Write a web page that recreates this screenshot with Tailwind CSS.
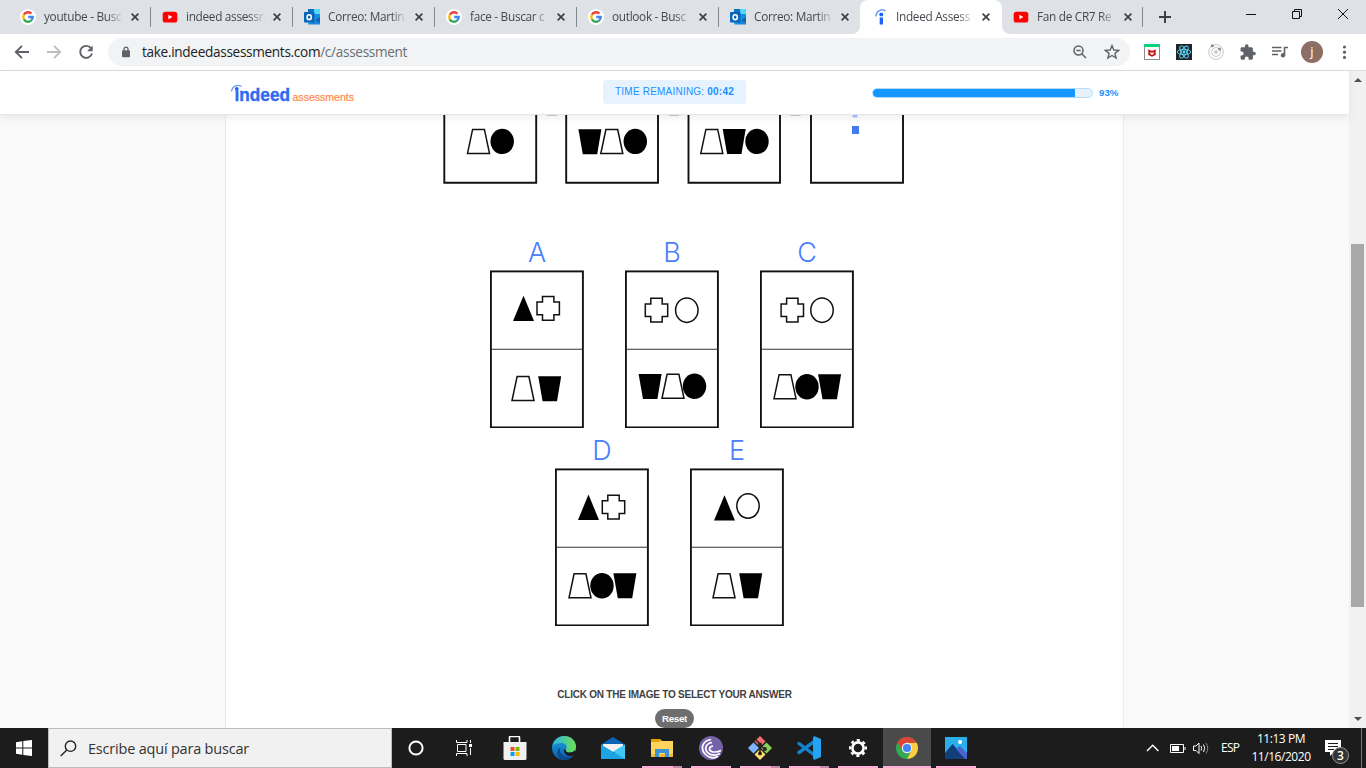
<!DOCTYPE html>
<html lang="es">
<head>
<meta charset="utf-8">
<title>Indeed Assessments</title>
<script src="https://cdn.jsdelivr.net/npm/@tailwindcss/browser@4"></script>
</head>
<body class="w-[1366px] h-[768px] overflow-hidden flex flex-col bg-white font-['Open_Sans','Noto_Sans',sans-serif]">
<svg width="0" height="0" class="absolute">
  <defs>
    <symbol id="google" viewBox="0 0 16 16"><circle cx="8" cy="8" r="8" fill="#fff"/><g fill="none" stroke-width="2.4"><path d="M3.9 5.7A4.7 4.7 0 0 1 11.4 4.7" stroke="#ea4335"/><path d="M3.9 10.3A4.7 4.7 0 0 1 3.9 5.7" stroke="#fbbc05"/><path d="M11.1 11.6A4.7 4.7 0 0 1 3.9 10.3" stroke="#34a853"/><path d="M8.2 8H12.7A4.7 4.7 0 0 1 11.1 11.6" stroke="#4285f4"/></g></symbol>
    <symbol id="youtube" viewBox="0 0 16 16"><rect x=".7" y="2.7" width="14.6" height="10.8" rx="2.6" fill="#f00"/><path d="M6.4 5.7v4.6l4-2.3z" fill="#fff"/></symbol>
    <symbol id="outlook" viewBox="0 0 16 16"><path d="M4 0h12v15H4z" fill="#28a8ea"/><path d="M10 0h6v5h-6z" fill="#50d9ff"/><path d="M4 0h6v5H4z" fill="#0f6fc0"/><path d="M10 5h6v4l-3 2-3-2z" fill="#1490df"/><path d="M4 15.5 16 8v7.5z" fill="#1a86d9"/><path d="M11 11l5-3v6z" fill="#1066b5"/><rect y="3" width="10.5" height="10.5" rx=".8" fill="#0a64b8"/><ellipse cx="5.2" cy="8.2" rx="2.1" ry="2.4" fill="none" stroke="#fff" stroke-width="1.6"/></symbol>
    <symbol id="indeed" viewBox="0 0 16 16"><circle cx="8.3" cy="5.4" r="2" fill="#2164f3"/><path d="M6.7 8.2q1.7.9 3.3 0v7.3H6.7z" fill="#2164f3"/><path d="M2.8 7.5C3.2 2 8-.6 12.6 2" fill="none" stroke="#5a8df5" stroke-width="1.2"/></symbol>
    <symbol id="close" viewBox="0 0 8 8"><path d="M.6.6 7.4 7.4M7.4.6.6 7.4" stroke="#3c4043" stroke-width="1.7"/></symbol>
    <symbol id="trap" viewBox="0 0 24 26" overflow="visible"><path d="M6.1 1H17.9L23 25H1z" fill="#fff" stroke="#111" stroke-width="1.5"/></symbol>
    <symbol id="cup" viewBox="0 0 24 26" overflow="visible"><path d="M.4.5H23.4L19.2 25.5H4.8z" fill="#000"/></symbol>
    <symbol id="disc" viewBox="0 0 24 26" overflow="visible"><ellipse cx="12" cy="13" rx="11.7" ry="12.7" fill="#000"/></symbol>
    <symbol id="ring" viewBox="0 0 24 26" overflow="visible"><ellipse cx="12" cy="13" rx="11.2" ry="12.2" fill="#fff" stroke="#111" stroke-width="1.5"/></symbol>
    <symbol id="tri" viewBox="0 0 24 26" overflow="visible"><path d="M10.5.3 21 25.6H0z" fill="#000"/></symbol>
    <symbol id="cross" viewBox="0 0 24 26" overflow="visible"><path d="M6.3 1H17.7V6.6H23.2V19.2H17.7V24.7H6.3V19.2H.8V6.6H6.3z" fill="#fff" stroke="#111" stroke-width="1.5"/></symbol>
    <symbol id="frame" viewBox="0 0 94 158"><rect x=".9" y="1.400" width="92" height="156" fill="#fff" stroke="#111" stroke-width="1.9"/><path d="M1 79.2H93" stroke="#333" stroke-width="1.1"/></symbol>
  </defs>
</svg>

<!-- Tab strip -->
<div class="h-[34px] shrink-0 bg-[#dee1e6] flex items-center pl-[9px] text-[11.8px] tracking-[-0.3px] text-[#45494d]">
  <div class="w-[142px] h-[34px] flex items-center pl-[11px]"><svg class="size-4"><use href="#google"/></svg><span class="ml-2 w-[79px] overflow-hidden whitespace-nowrap mask-r-from-80% mask-r-to-100%">youtube - Busc</span><svg class="ml-[8px] size-[8px]"><use href="#close"/></svg><i class="ml-auto w-px h-5 bg-[#85898d]"></i></div>
  <div class="w-[142px] h-[34px] flex items-center pl-[11px]"><svg class="size-4"><use href="#youtube"/></svg><span class="ml-2 w-[79px] overflow-hidden whitespace-nowrap mask-r-from-80% mask-r-to-100%">indeed assessn</span><svg class="ml-[8px] size-[8px]"><use href="#close"/></svg><i class="ml-auto w-px h-5 bg-[#85898d]"></i></div>
  <div class="w-[142px] h-[34px] flex items-center pl-[11px]"><svg class="size-4"><use href="#outlook"/></svg><span class="ml-2 w-[79px] overflow-hidden whitespace-nowrap mask-r-from-80% mask-r-to-100%">Correo: Martin</span><svg class="ml-[8px] size-[8px]"><use href="#close"/></svg><i class="ml-auto w-px h-5 bg-[#85898d]"></i></div>
  <div class="w-[142px] h-[34px] flex items-center pl-[11px]"><svg class="size-4"><use href="#google"/></svg><span class="ml-2 w-[79px] overflow-hidden whitespace-nowrap mask-r-from-80% mask-r-to-100%">face - Buscar c</span><svg class="ml-[8px] size-[8px]"><use href="#close"/></svg><i class="ml-auto w-px h-5 bg-[#85898d]"></i></div>
  <div class="w-[142px] h-[34px] flex items-center pl-[11px]"><svg class="size-4"><use href="#google"/></svg><span class="ml-2 w-[79px] overflow-hidden whitespace-nowrap mask-r-from-80% mask-r-to-100%">outlook - Busc</span><svg class="ml-[8px] size-[8px]"><use href="#close"/></svg><i class="ml-auto w-px h-5 bg-[#85898d]"></i></div>
  <div class="w-[141px] h-[34px] flex items-center pl-[11px]"><svg class="size-4"><use href="#outlook"/></svg><span class="ml-2 w-[79px] overflow-hidden whitespace-nowrap mask-r-from-80% mask-r-to-100%">Correo: Martin</span><svg class="ml-[8px] size-[8px]"><use href="#close"/></svg></div>
  <div class="relative w-[142px] h-[34px] flex items-center pl-[13px] bg-white rounded-t-lg"><svg class="absolute -left-2 bottom-0 size-2"><path d="M8 0V8H0A8 8 0 0 0 8 0" fill="#fff"/></svg><svg class="absolute -right-2 bottom-0 size-2"><path d="M0 0V8H8A8 8 0 0 1 0 0" fill="#fff"/></svg><svg class="size-4"><use href="#indeed"/></svg><span class="ml-[7px] w-[78px] overflow-hidden whitespace-nowrap mask-r-from-80% mask-r-to-100%">Indeed Assess</span><svg class="ml-[8px] size-[8px]"><use href="#close"/></svg></div>
  <div class="w-[141px] h-[34px] flex items-center pl-[11px]"><svg class="size-4"><use href="#youtube"/></svg><span class="ml-2 w-[79px] overflow-hidden whitespace-nowrap mask-r-from-80% mask-r-to-100%">Fan de CR7 Re</span><svg class="ml-[8px] size-[8px]"><use href="#close"/></svg><i class="ml-auto w-px h-5 bg-[#85898d]"></i></div>
  <svg class="ml-4 size-3"><path d="M6 0V12M0 6H12" stroke="#3c4043" stroke-width="2"/></svg>
  <svg class="ml-auto mb-[6px] mr-[17px]" width="105" height="12"><g fill="none" stroke="#111"><path d="M2 6.5H12M48.500 3.500h7v7h-7zM50.500 3.500v-2h7v7h-2M94 1 104 11M104 1 94 11"/></g></svg>
</div>

<!-- Toolbar -->
<div class="h-9 shrink-0 flex items-center bg-white">
  <svg width="108" height="36" fill="none" stroke="#5f6368" stroke-width="1.9"><path d="M29 18H16M22 11.800 15.800 18 22 24.200"/><path d="M47 18H60M54 11.800 60.200 18 54 24.200" stroke="#bcbec1"/><path d="M91 14.200A6 6 0 1 0 92 19.500"/><path d="M92.700 11.500v5.700H87z" fill="#5f6368" stroke="none"/></svg>
  <div class="w-[1022px] h-7 rounded-full bg-[#f1f3f4] flex items-center pl-[14px] pr-[10px]">
    <svg width="8" height="12"><path d="M2 5V3.200a2 2 0 0 1 4 0V5" fill="none" stroke="#5f6368" stroke-width="1.300"/><rect y="4.200" width="8" height="7" rx="1" fill="#5f6368"/></svg>
    <span class="ml-3 text-[13.600px] leading-[18px] tracking-[-0.310px] text-[#202124]">take.indeedassessments.com<span class="text-[#6a6e73]">/c/assessment</span></span>
    <svg class="ml-auto" width="14" height="14" fill="none" stroke="#5f6368" stroke-width="1.500"><circle cx="5.500" cy="5.500" r="4.500"/><path d="M9 9 13 13M3.300 5.500H7.700"/></svg>
    <svg class="ml-[17px]" width="16" height="16" viewBox="0 0 16 16"><path d="M8 1.600 9.800 6l4.800.4-3.700 3.100L12.100 14 8 11.500 3.900 14 5.100 9.500 1.400 6.400 6.200 6z" fill="none" stroke="#5f6368" stroke-width="1.400"/></svg>
  </div>
  <div class="flex items-center gap-4 pl-[14px]">
    <svg class="size-4"><rect x=".5" y=".5" width="15" height="15" fill="#fff" stroke="#8a8d91"/><path d="M0 0H16V3H0z" fill="#0fd07c"/><path d="M4.300 5.200 8 7l3.700-1.800V11L8 12.800 4.300 11z" fill="#c01818"/><path d="M6.300 8l1.700.9L9.700 8v2L8 10.800 6.300 10z" fill="#fff"/></svg>
    <svg class="size-4"><path d="M0 0H16V16H0z" fill="#20232a"/><g fill="none" stroke="#61dafb" stroke-width=".9"><ellipse cx="8" cy="8" rx="6.800" ry="2.600"/><ellipse cx="8" cy="8" rx="6.800" ry="2.600" transform="rotate(60 8 8)"/><ellipse cx="8" cy="8" rx="6.800" ry="2.600" transform="rotate(120 8 8)"/></g><circle cx="8" cy="8" r="1.400" fill="#61dafb"/></svg>
    <svg class="size-4" fill="none" stroke="#c4c4c4"><circle cx="8" cy="8" r="7.300"/><circle cx="8" cy="8" r="4.400"/><circle cx="8" cy="8" r="2" fill="#ccc" stroke="none"/><circle cx="4.300" cy="1.800" r="1.500" fill="#888" stroke="none"/><circle cx="11.500" cy="5" r="1.500" fill="#888" stroke="none"/></svg>
    <svg class="size-4" viewBox="1.500 .5 21.500 22"><path fill="#5f6368" d="M20.500 11H19V7c0-1.100-.9-2-2-2h-4V3.500a2.500 2.500 0 0 0-5 0V5H4c-1.100 0-2 .9-2 2v3.800h1.500a2.700 2.700 0 0 1 0 5.400H2V20c0 1.100.9 2 2 2h3.800v-1.500a2.700 2.700 0 0 1 5.400 0V22H17c1.100 0 2-.9 2-2v-4h1.500a2.500 2.500 0 0 0 0-5z"/></svg>
    <svg class="size-4"><path d="M0 3.500H9.500M0 7H9.500M0 10.500H6M12.500 11V3.500H16" fill="none" stroke="#5f6368" stroke-width="1.600"/><circle cx="11" cy="11.300" r="2.200" fill="#5f6368"/></svg>
    <div class="-ml-[3px] size-[22px] rounded-full bg-[#8d6e63] text-white text-[13px] leading-[20px] text-center">j</div>
    <svg class="-ml-[3px] w-4 h-4" fill="#5f6368"><circle cx="8.500" cy="3" r="1.600"/><circle cx="8.500" cy="8.200" r="1.600"/><circle cx="8.500" cy="13.400" r="1.600"/></svg>
  </div>
</div>
<div class="h-px shrink-0 bg-[#dadce0]"></div>

<!-- Page -->
<div class="h-[657px] shrink-0 flex">
  <div class="w-[1349px] flex flex-col bg-[#f9f9f9] font-['Liberation_Sans',Arial,sans-serif]">
    <header class="relative z-10 h-[44px] shrink-0 bg-white border-b border-[#e6e6e6] shadow-[0_3px_8px_rgba(0,0,0,0.07)] flex pl-[230px]">
      <svg width="128" height="43" font-family="Liberation Sans, Arial, sans-serif"><path d="M1.500 20.500C2.500 14.500 7.500 13 11.500 15.500" fill="none" stroke="#6f9cf7" stroke-width="1.300"/><circle cx="6.800" cy="18" r="1.900" fill="#2164f3"/><text x="4.500" y="29.700" font-size="18.300" font-weight="700" fill="#2f6bf0" stroke="#2f6bf0" stroke-width=".4" textLength="55.500" lengthAdjust="spacingAndGlyphs">ındeed</text><text x="62.500" y="30" font-size="10.800" fill="#ff8a4a" stroke="#ff8a4a" stroke-width=".2" textLength="61.500" lengthAdjust="spacingAndGlyphs">assessments</text></svg>
      <div class="ml-[245px] mt-[9px] h-6 w-[143px] rounded-[3px] bg-[#e6f3ff] text-[#1890ff] text-[10px] leading-[24px] tracking-[0.210px] text-center whitespace-nowrap">TIME REMAINING: <b>00:42</b></div>
      <div class="ml-[126px] mt-[17px] w-[221px] h-[10px] rounded-full overflow-hidden border border-[#b5dcfb] bg-[#e6f3ff]"><div class="h-full bg-[#1696ff]" style="width:92.300%"></div></div>
      <b class="ml-[6px] mt-[14px] text-[9.700px] leading-4 text-[#1890ff]">93%</b>
    </header>
    <main class="ml-[225px] w-[899px] flex-1 min-h-0 overflow-hidden bg-white border-x border-[#ebebeb]">
      <svg class="ml-[217px] block" width="463" height="70">
        <g fill="none" stroke="#111" stroke-width="1.900"><path d="M1.300-5V67.800H93.200V-5M123.200-5V67.800H215V-5M245.500-5V67.800H337V-5M368-5V67.800H460V-5"/></g>
        <path d="M104 .2H114M226 .2H236M347.500 .2H357.500" stroke="#ccc" stroke-width="1.400"/>
        <use href="#trap" x="23.500" y="13.400" width="24" height="26"/><use href="#disc" x="47.200" y="13.400" width="24" height="26"/>
        <use href="#cup" x="135" y="13.800" width="24" height="26"/><use href="#trap" x="156.800" y="13.500" width="24" height="26"/><use href="#disc" x="180.300" y="13.400" width="24" height="26"/>
        <use href="#trap" x="256.800" y="13.400" width="24" height="26"/><use href="#cup" x="279.300" y="13.400" width="24" height="26"/><use href="#disc" x="302" y="13.400" width="24" height="26"/>
        <path d="M409.500 0h5v2.500h-5z" fill="#a9c0fb"/><path d="M409 11h7v8h-7z" fill="#4379f2"/>
      </svg>
      <div class="ml-[264px] mt-[51px] flex gap-[41px] font-['Inter',sans-serif] font-light text-[27px] leading-[34px] text-[#4a80fa] text-center">
        <div class="w-[94px]">A<svg class="block" width="94" height="158"><use href="#frame"/><use href="#tri" x="23" y="25.500" width="24" height="26"/><use href="#cross" x="46.200" y="25.500" width="24" height="26"/><use href="#trap" x="21" y="105.500" width="24" height="26"/><use href="#cup" x="47.800" y="105.700" width="24" height="26"/></svg></div>
        <div class="w-[94px]">B<svg class="block" width="94" height="158"><use href="#frame"/><use href="#cross" x="19.500" y="27.300" width="24" height="26"/><use href="#ring" x="49.800" y="27.200" width="24" height="26"/><use href="#cup" x="13.200" y="103.500" width="24" height="26"/><use href="#trap" x="36" y="103.300" width="24" height="26"/><use href="#disc" x="57.500" y="103.300" width="24" height="26"/></svg></div>
        <div class="w-[94px]">C<svg class="block" width="94" height="158"><use href="#frame"/><use href="#cross" x="20.300" y="27.300" width="24" height="26"/><use href="#ring" x="50" y="27.200" width="24" height="26"/><use href="#trap" x="13" y="103.700" width="24" height="26"/><use href="#disc" x="35" y="103.700" width="24" height="26"/><use href="#cup" x="57.700" y="103.700" width="24" height="26"/></svg></div>
      </div>
      <div class="ml-[329px] mt-[6px] flex gap-[41px] font-['Inter',sans-serif] font-light text-[27px] leading-[34px] text-[#4a80fa] text-center">
        <div class="w-[94px]">D<svg class="block" width="94" height="158"><use href="#frame"/><use href="#tri" x="23" y="26.300" width="24" height="26"/><use href="#cross" x="46.500" y="26.200" width="24" height="26"/><use href="#trap" x="13" y="104.800" width="24" height="26"/><use href="#disc" x="35" y="104.800" width="24" height="26"/><use href="#cup" x="58" y="104.800" width="24" height="26"/></svg></div>
        <div class="w-[94px]">E<svg class="block" width="94" height="158"><use href="#frame"/><use href="#tri" x="24" y="27" width="24" height="26"/><use href="#ring" x="46" y="25" width="24" height="26"/><use href="#trap" x="22" y="104.800" width="24" height="26"/><use href="#cup" x="48.800" y="104.800" width="24" height="26"/></svg></div>
      </div>
      <div class="mt-[62px] flex flex-col items-center text-[10px] leading-[14px]">
        <b class="text-[#3f3f3f] whitespace-nowrap tracking-[-0.235px]">CLICK ON THE IMAGE TO SELECT YOUR ANSWER</b>
        <div class="mt-[7px] h-[19px] w-[39px] rounded-full bg-[#6e6e6e] text-white text-center text-[9.700px] tracking-[-0.250px] leading-[19px] font-bold">Reset</div>
      </div>
    </main>
  </div>
  <div class="w-[17px] bg-[#f1f1f1] flex flex-col items-center">
    <svg class="mt-[7px]" width="8" height="4"><path d="M4 0 8 4H0z" fill="#505050"/></svg>
    <div class="mt-[162px] w-[13px] h-[363px] bg-[#a8a8a8]"></div>
    <svg class="mt-auto mb-[7px]" width="8" height="4"><path d="M0 0H8L4 4z" fill="#505050"/></svg>
  </div>
</div>

<!-- Taskbar -->
<div class="h-10 shrink-0 bg-[#1c1c1c] flex items-center text-white">
  <svg width="48" height="40" fill="#fff"><path d="M16 14.200 22.300 13.300V19.500H16zM23.300 13.100 32 12V19.500H23.300zM16 20.500H22.300V26.700L16 25.800zM23.300 20.500H32V28L23.300 26.900z"/></svg>
  <div class="w-[344px] h-10 bg-[#f1f1f1] border border-[#bcbcbc] flex items-center pl-[11px]">
    <svg width="17" height="17" fill="none" stroke="#222" stroke-width="1.400"><circle cx="10.500" cy="6.200" r="5.200"/><path d="M6.800 10 .7 16"/></svg>
    <span class="ml-[11px] mt-px text-[14.500px] tracking-[-0.200px] text-[#333]">Escribe aquí para buscar</span>
  </div>
  <div class="w-12 flex justify-center"><svg width="16" height="16"><circle cx="8" cy="8" r="6.600" fill="none" stroke="#fff" stroke-width="2"/></svg></div>
  <div class="w-12 flex justify-center"><svg width="16" height="16" fill="none" stroke="#fff"><path d="M.5 0V2.500H11V0M.5 16V13.500H11V16M1.500 4.500H10V11.500H1.500zM14.500 0V3M14.500 8V15"/><path d="M13 4h3v3h-3z" fill="#fff" stroke="none"/></svg></div>
  <div class="flex h-10 pl-[2px] [&>div]:w-[49px] [&>div]:shrink-0 [&>div]:h-10 [&>div]:flex [&>div]:flex-col [&>div]:items-center [&>div]:pt-2 [&_i]:mt-auto [&_i]:h-[2px] [&_i]:w-10 [&_i]:bg-[#ffaed6]">
    <div><svg width="24" height="24"><path d="M6.500 7V1.500q0-1 1-1h8q1 0 1 1V7" fill="none" stroke="#fff" stroke-width="1.600"/><path d="M.5 6H23.500V22.500q0 1.500-1.500 1.500H2q-1.500 0-1.500-1.500z" fill="#f0f0f0"/><path d="M7.500 11h4v4h-4z" fill="#f25022"/><path d="M12.500 11h4v4h-4z" fill="#7fba00"/><path d="M7.500 16h4v4h-4z" fill="#00a4ef"/><path d="M12.500 16h4v4h-4z" fill="#ffb900"/></svg></div>
    <div><svg width="24" height="24"><defs><linearGradient id="eg"><stop stop-color="#2bb6e8"/><stop offset="1" stop-color="#6be04e"/></linearGradient><linearGradient id="eb" x2="0" y2="1"><stop stop-color="#1ca5e8"/><stop offset="1" stop-color="#0c59a4"/></linearGradient></defs><circle cx="12" cy="12" r="12" fill="url(#eb)"/><path d="M.5 10C2 3.500 7 0 12 0c7 0 12 5 12 10.500 0 4-3 6-6 6-3.500 0-5-1.500-4-3 2-4-1-6.500-5-6.500S2 8 .5 10z" fill="url(#eg)"/><path d="M14 13.500c-1 1.500.5 3 4 3 1.800 0 3.500-.7 4.700-2L24 17l-2.500 2.500c-5 2-10-1-9.500-6z" fill="#1c1c1c"/><path d="M8 12c-1 6 4 10 10 9-2 2-4 3-6.500 3C4 22 4 14 8 12z" fill="#0a4a8c"/></svg></div>
    <div><svg width="24" height="24"><path d="M0 8.500 12 1 24 8.500V12H0z" fill="#0a63b8"/><path d="M2 8H22V16H2z" fill="#f2f2f2"/><path d="M0 8.500 14 17 24 9V23H0z" fill="#1ca4e4"/><path d="M24 8.500V23L12 15.500z" fill="#41c8f4"/></svg></div>
    <div><svg width="24" height="24"><path d="M1 3H10L12 5H23V21H1z" fill="#ffd35c"/><path d="M1 3H10L11 4.500 9 6H1z" fill="#e6a200"/><path d="M1 18H23V21H1z" fill="#f2b93a"/><path d="M5 13H19V21H15V17H9V21H5z" fill="#3a94d8"/></svg><i class="border-r-[9px] border-[#c88aab]"></i></div>
    <div><svg width="24" height="24"><circle cx="12" cy="12" r="12" fill="#7662a8"/><g fill="none" stroke="#fff" stroke-width="1.700"><path d="M12 3.500C3 5 1 13 6.500 18.500c4 3.700 9 3.800 12.500 1.800"/><path d="M13 6.500C6.500 7.500 5 13.500 9 17c3.500 2.800 8.500 2.300 12 .5"/><path d="M14 10C9.500 10.500 9.500 15 13.500 15.800c3 .5 6 0 8.500-1.300"/></g></svg><i></i></div>
    <div><svg width="24" height="24"><path d="M12 0 17.500 5.500 12 11 6.500 5.500z" fill="#f66f70"/><path d="M18.500 6.500 24 12 18.500 17.500 13 12z" fill="#8bd05a"/><path d="M5.500 6.500 11 12 5.500 17.500 0 12z" fill="#7fb5ff"/><path d="M12 13 17.500 18.500 12 24 6.500 18.500z" fill="#ffe070"/><path d="M8 4 12 8V18M12 9 16.500 13" fill="none" stroke="#2a2020" stroke-width="1.600"/><g fill="#2a2020"><circle cx="12" cy="8.500" r="1.900"/><circle cx="17" cy="13" r="1.900"/><circle cx="12" cy="17.500" r="1.900"/></g></svg><i class="border-r-[9px] border-[#c88aab]"></i></div>
    <div><svg width="24" height="24"><path d="M2 7.500 18 19.500M2 16.500 18 5" stroke="#1482cc" stroke-width="3.400" stroke-linecap="round"/><path d="M17 0 24 3V21L17 24 16 22V2z" fill="#23a3f2"/></svg><i class="border-r-[9px] border-[#c88aab]"></i></div>
    <div><svg width="24" height="24" fill="none" stroke="#fff"><circle cx="12" cy="12" r="5.600" stroke-width="2.600"/><circle cx="12" cy="12" r="7.900" stroke-width="2.200" stroke-dasharray="3.100 3.104" transform="rotate(-11 12 12)"/></svg><i></i></div>
  </div>
  <div class="ml-px w-12 h-10 shrink-0 bg-[#4a4a4a] flex flex-col items-center pt-2"><svg width="24" height="24"><circle cx="12" cy="12" r="11" fill="#34a853"/><path d="M12 6.800H21.700A11 11 0 0 1 12 23L16.500 14.600z" fill="#ffcd40"/><path d="M2.500 6.500A11 11 0 0 1 21.700 6.800H12L7.500 14.600z" fill="#db4437"/><circle cx="12" cy="12" r="5.200" fill="#f1f1f1"/><circle cx="12" cy="12" r="4.100" fill="#4285f4"/></svg><i class="mt-auto h-[2px] w-12 bg-[#ffaed6]"></i></div>
  <div class="w-[50px] h-10 flex flex-col items-center pt-2"><svg width="24" height="24"><path d="M1 1H23V23H1z" fill="#29b0ea"/><path d="M1 17 8.500 8 22 23H1z" fill="#123f7c"/><path d="M12 13 16 10 23 17V23H21z" fill="#4a63cf"/><circle cx="16" cy="6" r="2" fill="#fff"/></svg><i class="mt-auto h-[2px] w-10 bg-[#ffaed6]"></i></div>
  <svg class="ml-auto" width="64" height="16" fill="none" stroke="#fff"><path d="M1 11 6.700 5.300 12.400 11" stroke-width="1.400"/><path d="M24.500 4.500H37.500V12.500H24.500zM39 7v3"/><path d="M26 6h7v5h-7z" fill="#fff" stroke="none"/><path d="M47.500 6H50L53 3V13.500L50 10.500H47.500zM55 6q1.500 2.200 0 4.500M57.500 4.500q2.500 3.700 0 7.500"/><path d="M60 3q3.500 5 0 10.500" stroke="#888"/></svg>
  <span class="ml-[11px] w-5 text-[12px] tracking-[-0.700px]">ESP</span>
  <div class="ml-[10px] w-[60px] text-center text-[12px] leading-[18px] tracking-[-0.450px] whitespace-nowrap">11:13 PM<br>11/16/2020</div>
  <svg class="ml-[13px]" width="27" height="40"><path d="M1 12H17V24H10L6 28V24H1z" fill="#fff"/><path d="M4 15.500H14M4 18.500H14M4 21.500H10" stroke="#1c1c1c"/><circle cx="16.500" cy="27.500" r="8" fill="#333" stroke="#999"/><text x="16.500" y="31.700" font-size="12" font-weight="600" fill="#fff" text-anchor="middle">3</text></svg>
  <div class="ml-[10px] w-px h-10 bg-[#777] mr-1"></div>
</div>
</body>
</html>
